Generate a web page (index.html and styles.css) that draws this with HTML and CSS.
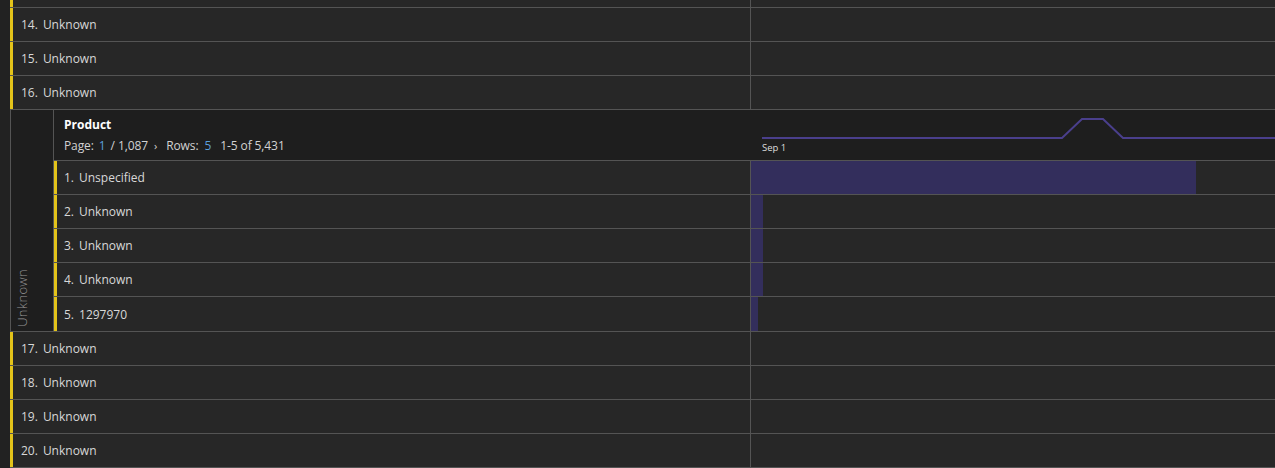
FILE: index.html
```html
<!DOCTYPE html>
<html>
<head>
<meta charset="utf-8">
<link rel="stylesheet" href="styles.css">
</head>
<body>
<div class="table">
  <div class="row row-partial"><div class="cell-label"></div><div class="cell-chart"></div></div>
  <div class="row"><div class="cell-label"><span class="num">14.</span><span>Unknown</span></div><div class="cell-chart"></div></div>
  <div class="row"><div class="cell-label"><span class="num">15.</span><span>Unknown</span></div><div class="cell-chart"></div></div>
  <div class="row"><div class="cell-label"><span class="num">16.</span><span>Unknown</span></div><div class="cell-chart"></div></div>

  <div class="section">
    <div class="side"><span class="side-text">Unknown</span></div>
    <div class="nested">
      <div class="nested-head">
        <div class="head-info">
          <div class="head-title">Product</div>
          <div class="head-meta">
            <span>Page:</span><span class="blue">1</span><span>/ 1,087</span><span class="chev">›</span><span>Rows:</span><span class="blue blue-rows">5</span><span>1-5 of 5,431</span>
          </div>
        </div>
        <div class="head-chart">
          <svg class="spark" width="525" height="50" viewBox="0 0 525 50">
            <polyline points="12,28 312,28 332,9 353,9 373,28 525,28" fill="none" stroke="#4a3f8c" stroke-width="2"/>
            <text x="12" y="41" class="spark-label">Sep 1</text>
          </svg>
        </div>
      </div>
      <div class="nrow"><div class="ncell-label"><span class="num">1.</span><span>Unspecified</span></div><div class="cell-chart"><div class="bar" style="width:445px"></div></div></div>
      <div class="nrow"><div class="ncell-label"><span class="num">2.</span><span>Unknown</span></div><div class="cell-chart"><div class="bar" style="width:12px"></div></div></div>
      <div class="nrow"><div class="ncell-label"><span class="num">3.</span><span>Unknown</span></div><div class="cell-chart"><div class="bar" style="width:12px"></div></div></div>
      <div class="nrow"><div class="ncell-label"><span class="num">4.</span><span>Unknown</span></div><div class="cell-chart"><div class="bar" style="width:12px"></div></div></div>
      <div class="nrow nrow-last"><div class="ncell-label"><span class="num">5.</span><span>1297970</span></div><div class="cell-chart"><div class="bar" style="width:7px"></div></div></div>
    </div>
  </div>

  <div class="row"><div class="cell-label"><span class="num">17.</span><span>Unknown</span></div><div class="cell-chart"></div></div>
  <div class="row"><div class="cell-label"><span class="num">18.</span><span>Unknown</span></div><div class="cell-chart"></div></div>
  <div class="row"><div class="cell-label"><span class="num">19.</span><span>Unknown</span></div><div class="cell-chart"></div></div>
  <div class="row"><div class="cell-label"><span class="num">20.</span><span>Unknown</span></div><div class="cell-chart"></div></div>
</div>
</body>
</html>
```
FILE: styles.css
```css
* { box-sizing: border-box; }
html, body {
  margin: 0;
  padding: 0;
  background: #222222;
  width: 1275px;
  height: 468px;
  overflow: hidden;
  font-family: "Open Sans", "Noto Sans", sans-serif;
  font-size: 12px;
  font-weight: 500;
  color: #d8d8d8;
}
.table {
  display: flex;
  flex-direction: column;
  padding-left: 10px;
}
.row {
  display: grid;
  grid-template-columns: 741px 1fr;
  height: 34px;
  border-bottom: 1px solid #545454;
  background: #272727;
}
.row-partial { height: 8px; }
.cell-label {
  display: flex;
  align-items: center;
  border-left: 3px solid #e3c31a;
  border-right: 1px solid #545454;
  padding-left: 8px;
  white-space: nowrap;
}
.num { margin-right: 5px; }
.cell-chart {
  position: relative;
  display: flex;
  align-items: stretch;
}
.bar {
  background: #332e5c;
  height: 100%;
}
.section {
  display: flex;
  border-left: 1px solid #545454;
  border-bottom: 1px solid #545454;
}
.side {
  width: 43px;
  background: #1e1e1e;
  border-right: 1px solid #545454;
  display: flex;
  flex-direction: column;
  justify-content: flex-end;
  align-items: flex-start;
  padding: 0 0 4px 2px;
}
.side-text {
  writing-mode: vertical-rl;
  transform: rotate(180deg);
  font-size: 13px;
  color: #9a9a9a;
  font-weight: 300;
  letter-spacing: 0.3px;
}
.nested {
  flex: 1;
  display: flex;
  flex-direction: column;
}
.nested-head {
  display: grid;
  grid-template-columns: 696px 1fr;
  height: 51px;
  background: #1e1e1e;
  border-bottom: 1px solid #545454;
}
.head-info {
  padding: 7px 0 0 10px;
  display: flex;
  flex-direction: column;
  gap: 5px;
}
.head-title {
  font-weight: 700;
  color: #ffffff;
  line-height: 16px;
}
.head-meta {
  display: flex;
  gap: 3px;
  color: #d2d2d2;
  line-height: 16px;
  white-space: nowrap;
  letter-spacing: -0.1px;
}
.blue { color: #5a9fdc; margin: 0 2px; }
.blue-rows { margin: 0 6px 0 3px; }
.chev { margin: 0 6px 0 3px; font-size: 11px; }
.head-chart { display: flex; }
.spark { display: block; }
.spark-label {
  font-family: "Open Sans", "Noto Sans", sans-serif;
  font-size: 9.5px;
  font-weight: 500;
  fill: #dddddd;
}
.nrow {
  display: grid;
  grid-template-columns: 697px 1fr;
  height: 34px;
  border-bottom: 1px solid #545454;
  background: #272727;
}
.nrow-last { border-bottom: none; }
.ncell-label {
  display: flex;
  align-items: center;
  border-left: 3px solid #e3c31a;
  border-right: 1px solid #545454;
  padding-left: 7px;
  white-space: nowrap;
}
```
